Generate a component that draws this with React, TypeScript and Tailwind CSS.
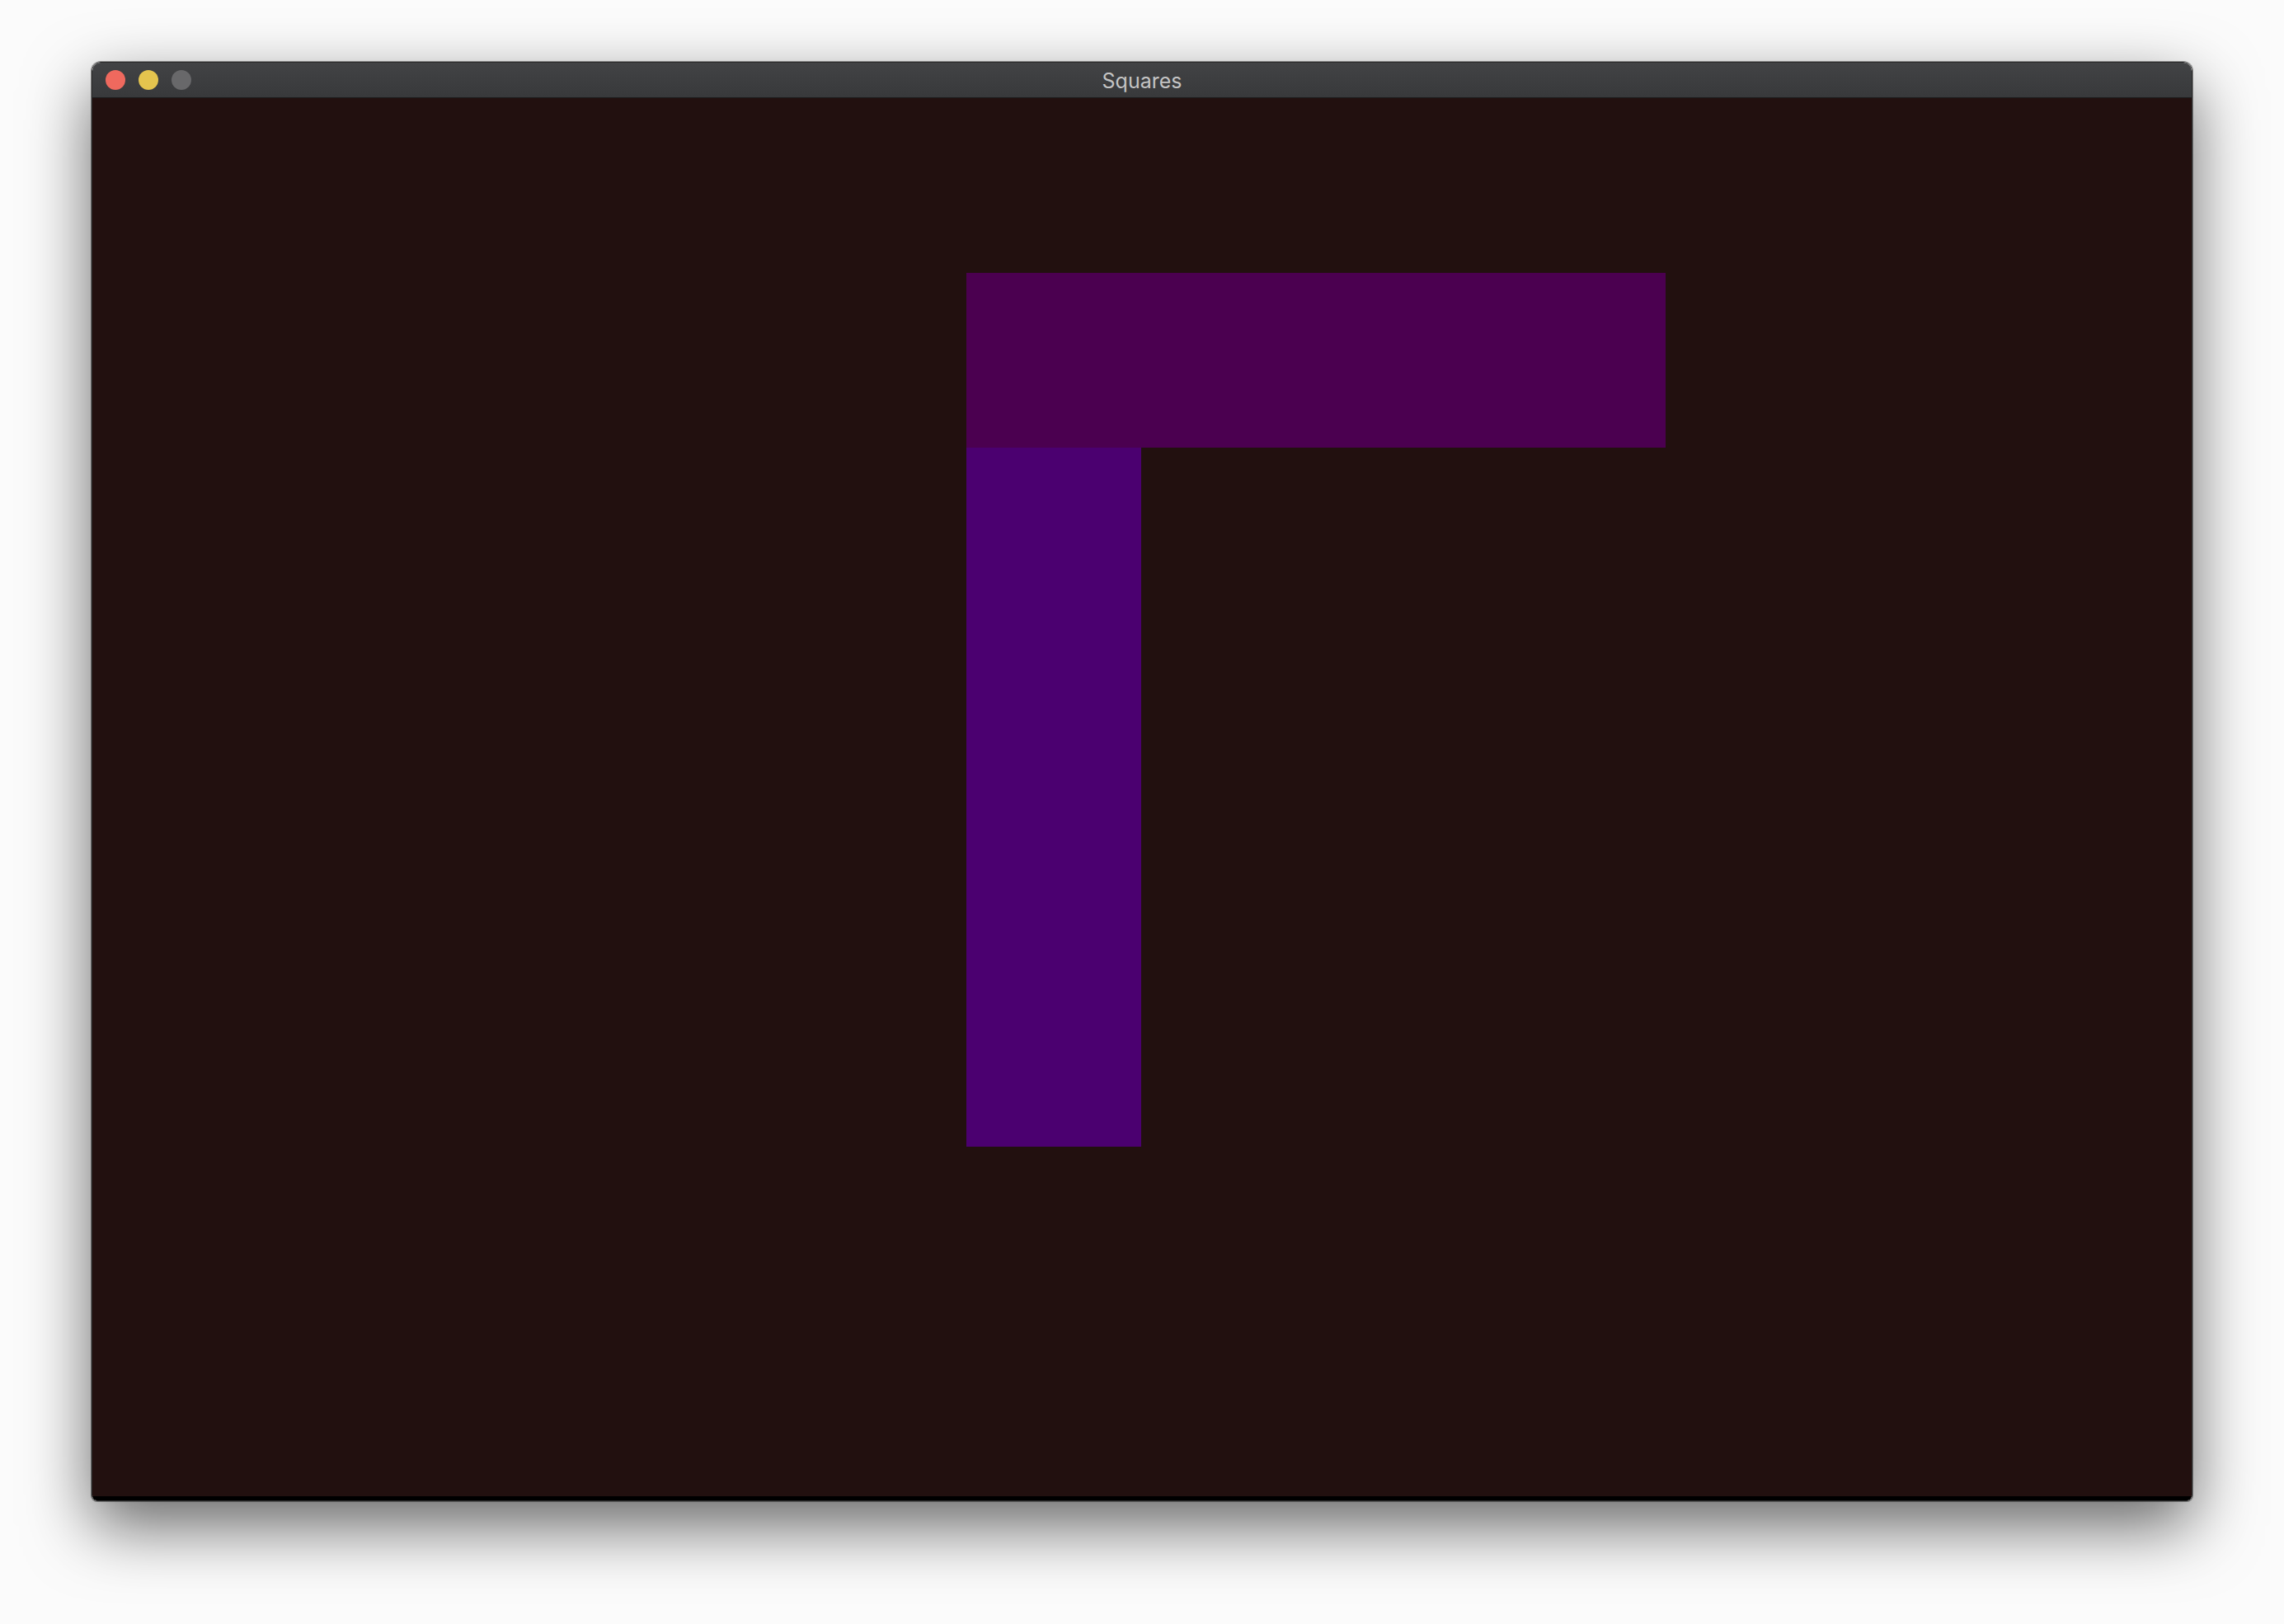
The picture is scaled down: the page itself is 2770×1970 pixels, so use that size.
export default function App() {
  return (
    <div className="h-[1970px] w-[2770px] bg-[#fbfbfb] pl-[111px] pt-[75px] font-['Inter','Liberation_Sans',sans-serif]">
      {/* Window */}
      <div className="w-[2548px] overflow-hidden rounded-t-[11px] rounded-b-[7px] border border-[#2a2a2a] shadow-[0_30px_80px_rgba(0,0,0,0.6),0_0_0_1px_rgba(90,90,90,0.6)]">
        {/* Title bar */}
        <div className="relative flex h-[43px] items-center border-b border-[#1c1c1c] bg-gradient-to-b from-[#424345] to-[#38393b] pl-[16px]">
          <div className="flex gap-[16px]">
            <span className="h-[24px] w-[24px] rounded-full bg-[#ef695e]" />
            <span className="h-[24px] w-[24px] rounded-full bg-[#e4c44e]" />
            <span className="h-[24px] w-[24px] rounded-full bg-[#68686a]" />
          </div>
          <div className="absolute inset-0 flex items-center justify-center pt-[3px] text-[25px] text-[#c4c4c4]">
            Squares
          </div>
        </div>

        {/* Content canvas */}
        <div className="grid h-[1701px] grid-cols-[repeat(12,212px)] grid-rows-[repeat(8,212px)] border-b-[5px] border-black bg-[#22100f]">
          <div className="col-span-4 col-start-6 row-start-2 bg-[#4b0050]" />
          <div className="col-start-6 row-span-4 row-start-3 bg-[#4b0070]" />
        </div>
      </div>
    </div>
  );
}
